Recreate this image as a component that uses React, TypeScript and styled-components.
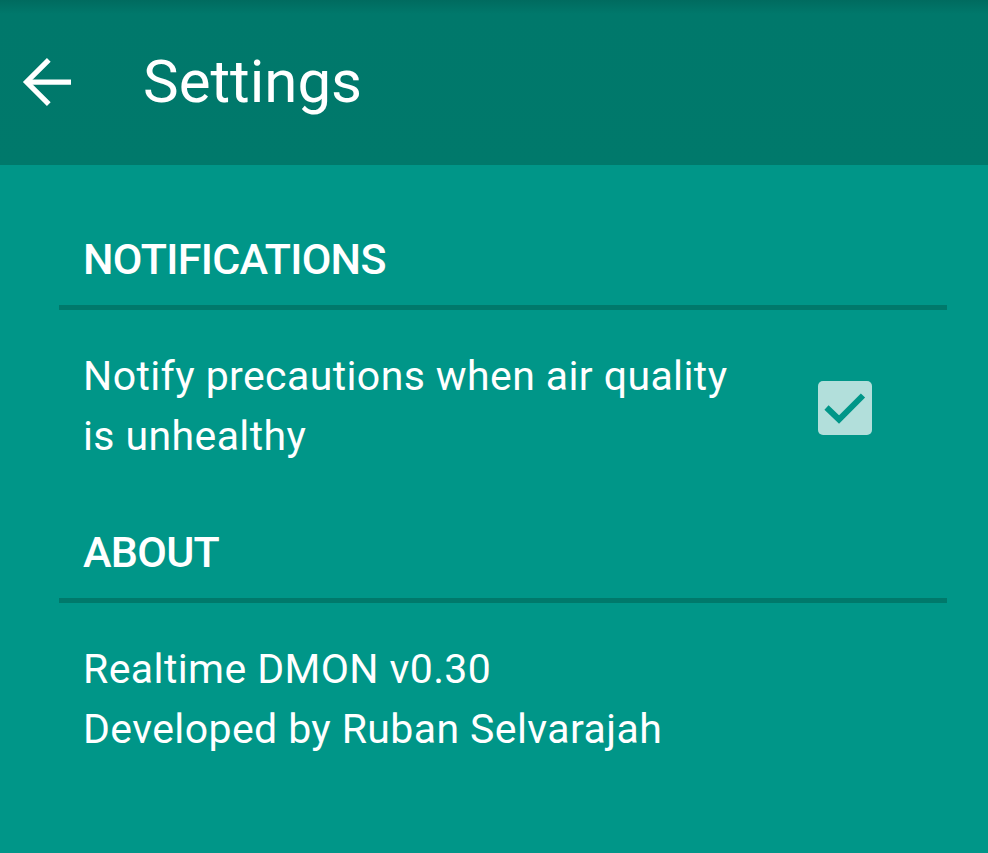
import React from "react";
import styled, { createGlobalStyle } from "styled-components";

const GlobalStyle = createGlobalStyle`
  html, body {
    margin: 0;
    padding: 0;
    background: #009688;
  }
  body {
    font-family: Roboto, "Noto Sans", "Liberation Sans", sans-serif;
    -webkit-font-smoothing: antialiased;
  }
`;

const Page = styled.div`
  width: 988px;
  height: 853px;
  background: #009688;
  overflow: hidden;
  display: flex;
  flex-direction: column;
`;

const AppBar = styled.header`
  height: 165px;
  flex: none;
  display: flex;
  align-items: center;
  padding-left: 11px;
  padding-bottom: 1px;
  box-sizing: border-box;
  background: linear-gradient(#006b5f 0px, #00786b 14px, #00796b 100%);
`;

const BackButton = styled.button`
  width: 72px;
  height: 72px;
  padding: 0;
  border: none;
  background: transparent;
  color: #ffffff;
  display: flex;
  align-items: center;
  justify-content: center;
  svg {
    display: block;
  }
`;

const Title = styled.h1`
  margin: 0 0 0 60px;
  font-family: Roboto, "Noto Sans", sans-serif;
  font-weight: 400;
  font-size: 60px;
  line-height: 72px;
  color: #ffffff;
`;

const Content = styled.main`
  display: flex;
  flex-direction: column;
  padding: 0 41px 0 59px;
`;

const SectionHeader = styled.h2<{ $top: number }>`
  margin: ${(p) => p.$top}px 0 0 0;
  padding-left: 24px;
  font-family: Roboto, "Noto Sans", sans-serif;
  font-weight: 500;
  font-size: 43px;
  letter-spacing: -0.7px;
  line-height: 52px;
  color: #ffffff;
`;

const Divider = styled.div`
  height: 5px;
  background: #00796b;
  margin-top: 20px;
`;

const Row = styled.div`
  display: flex;
  align-items: center;
  padding: 36px 0 0 24px;
`;

const BodyText = styled.div<{ $width?: number }>`
  font-family: Roboto, "Noto Sans", sans-serif;
  font-weight: 400;
  font-size: 41px;
  letter-spacing: 0.4px;
  line-height: 60px;
  color: #ffffff;
  width: ${(p) => (p.$width ? `${p.$width}px` : "auto")};
`;

const AboutBlock = styled.div`
  padding: 36px 0 0 24px;
`;

const CheckBox = styled.div`
  width: 54px;
  height: 54px;
  margin-left: 75px;
  margin-top: 4px;
  border-radius: 5px;
  background: #b2dfdb;
  flex: none;
  svg {
    display: block;
  }
`;

export default function App() {
  return (
    <>
      <GlobalStyle />
      <Page>
        <AppBar>
          <BackButton aria-label="Back">
            <svg width="72" height="72" viewBox="0 0 24 24" fill="none" stroke="#ffffff" strokeWidth="1.75">
              <path d="M20 12H5.2" />
              <path d="M12.6 4.6L5.2 12l7.4 7.4" />
            </svg>
          </BackButton>
          <Title>Settings</Title>
        </AppBar>
        <Content>
          <SectionHeader $top={68}>NOTIFICATIONS</SectionHeader>
          <Divider />
          <Row>
            <BodyText $width={660}>
              Notify precautions when air quality is unhealthy
            </BodyText>
            <CheckBox role="checkbox" aria-checked="true">
              <svg width="54" height="54" viewBox="0 0 54 54">
                <path
                  d="M8.5 26.5 L21 38.5 L45 14.5"
                  fill="none"
                  stroke="#009688"
                  strokeWidth="6"
                />
              </svg>
            </CheckBox>
          </Row>
          <SectionHeader $top={60}>ABOUT</SectionHeader>
          <Divider />
          <AboutBlock>
            <BodyText>Realtime DMON v0.30</BodyText>
            <BodyText>Developed by Ruban Selvarajah</BodyText>
          </AboutBlock>
        </Content>
      </Page>
    </>
  );
}
